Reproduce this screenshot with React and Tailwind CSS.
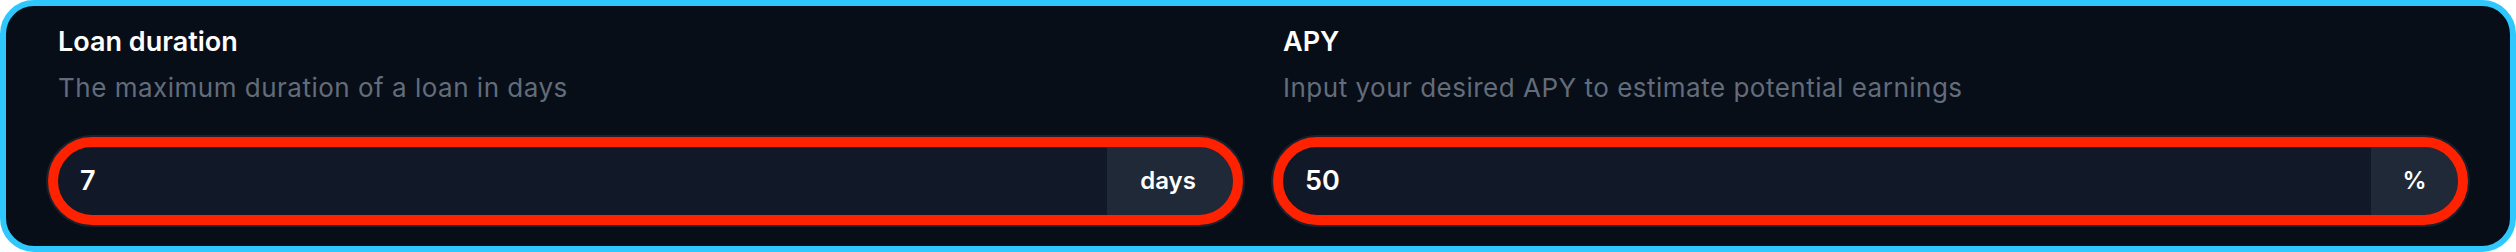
import React from 'react';

const font = { fontFamily: 'Inter, "Noto Sans", sans-serif' };

function Field({ title, hint, value, unit, unitWidth }) {
  return (
    <div className="flex flex-col">
      <h3 className="text-[27px] font-semibold leading-[36px] text-white">{title}</h3>
      <p className="mt-[13px] text-[26px] leading-[30px] tracking-[0.5px] text-[#636c7a]">{hint}</p>
      <div className="mt-[44px] flex h-[68px] overflow-hidden rounded-full bg-[#111827] outline-[10px] outline-solid outline-[#ff2200] shadow-[0_0_0_12px_#19212d]">
        <input
          readOnly
          value={value}
          className="min-w-0 flex-1 bg-transparent pl-[22px] text-[27px] font-semibold text-white outline-none"
          style={font}
        />
        <div className={`flex items-center justify-center bg-[#1f2937] text-[24px] font-semibold text-white ${unitWidth}`}>
          {unit}
        </div>
      </div>
    </div>
  );
}

export default function App() {
  return (
    <div className="bg-white" style={font}>
      <div className="h-[252px] rounded-[34px] border-[6px] border-[#2ec8ff] bg-[#070e18] px-[52px] pt-[18px]">
        <div className="grid grid-cols-2 gap-[50px]">
          <Field
            title="Loan duration"
            hint="The maximum duration of a loan in days"
            value="7"
            unit="days"
            unitWidth="w-[126px] pr-[4px]"
          />
          <Field
            title="APY"
            hint="Input your desired APY to estimate potential earnings"
            value="50"
            unit="%"
            unitWidth="w-[87px]"
          />
        </div>
      </div>
    </div>
  );
}
